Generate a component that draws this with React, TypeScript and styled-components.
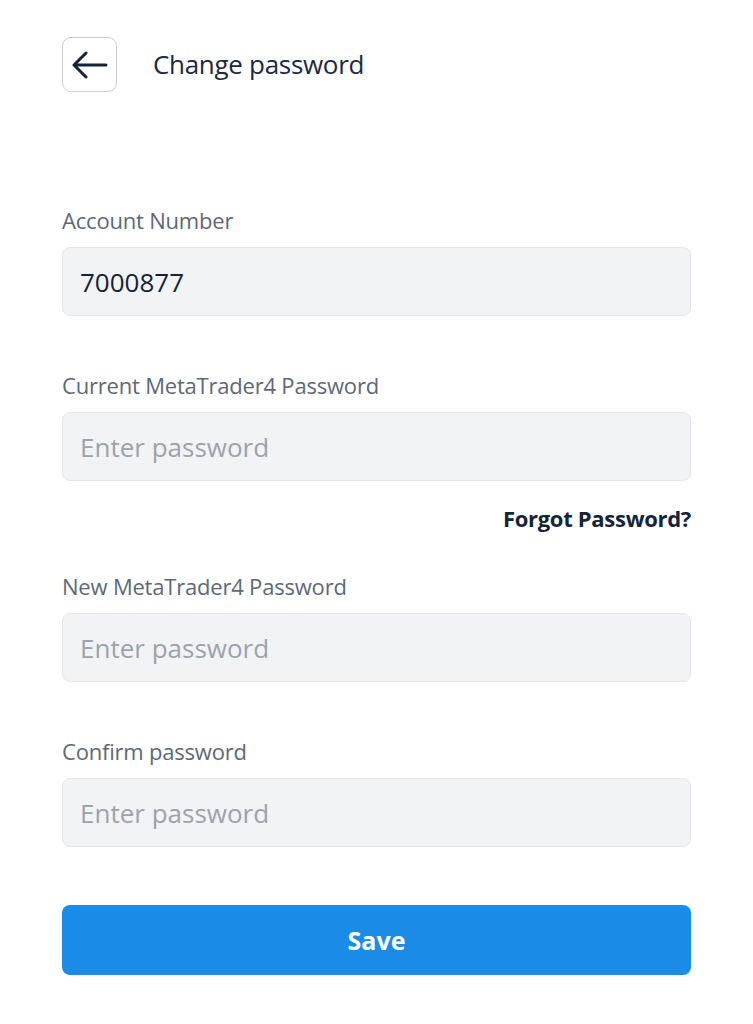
import React from "react";
import styled, { createGlobalStyle } from "styled-components";

const GlobalStyle = createGlobalStyle`
  html, body {
    margin: 0;
    padding: 0;
    background: #ffffff;
  }
  body {
    font-family: "Open Sans", "Noto Sans", "Liberation Sans", sans-serif;
  }
  * {
    box-sizing: border-box;
  }
`;

type TFieldProps = {
  label: string;
  value?: string;
  placeholder?: string;
  children?: React.ReactNode;
};

const Field = ({ label, value, placeholder, children }: TFieldProps) => {
  return (
    <FieldStyle>
      <LabelStyle>{label}</LabelStyle>
      <InputStyle
        type={value ? "text" : "password"}
        defaultValue={value}
        placeholder={placeholder}
        readOnly={!!value}
      />
      {children}
    </FieldStyle>
  );
};

const BackIcon = () => (
  <svg width="36" height="28" viewBox="0 0 36 28" fill="none">
    <path
      d="M2 14H34M14 2L2 14L14 26"
      stroke="#13233a"
      strokeWidth="3"
      strokeLinecap="round"
      strokeLinejoin="round"
    />
  </svg>
);

const App = () => {
  return (
    <>
      <GlobalStyle />
      <PageStyle>
        <HeaderStyle>
          <BackButtonStyle aria-label="Back">
            <BackIcon />
          </BackButtonStyle>
          <TitleStyle>Change password</TitleStyle>
        </HeaderStyle>

        <FormStyle>
          <Field label="Account Number" value="7000877" />
          <Field
            label="Current MetaTrader4 Password"
            placeholder="Enter password"
          >
            <ForgotStyle href="#">Forgot Password?</ForgotStyle>
          </Field>
          <Field label="New MetaTrader4 Password" placeholder="Enter password" />
          <Field label="Confirm password" placeholder="Enter password" />
        </FormStyle>

        <SaveButtonStyle>Save</SaveButtonStyle>
      </PageStyle>
    </>
  );
};

export default App;

const PageStyle = styled.div`
  display: flex;
  flex-direction: column;
  padding: 37px 62px 40px;
  min-height: 1024px;
`;

const HeaderStyle = styled.div`
  display: flex;
  align-items: center;
  gap: 36px;
  height: 55px;
`;

const BackButtonStyle = styled.button`
  width: 55px;
  height: 55px;
  display: flex;
  align-items: center;
  justify-content: center;
  background: #ffffff;
  border: 1.5px solid #c9ccd1;
  border-radius: 9px;
  padding: 0;
  cursor: pointer;
`;

const TitleStyle = styled.h1`
  margin: -2px 0 0;
  font-size: 26px;
  font-weight: 400;
  color: #1b2a3f;
  letter-spacing: -0.3px;
`;

const FormStyle = styled.div`
  display: flex;
  flex-direction: column;
  gap: 55px;
  margin-top: 114px;
`;

const FieldStyle = styled.div`
  display: flex;
  flex-direction: column;
  gap: 13px;
`;

const LabelStyle = styled.label`
  font-size: 22px;
  line-height: 28px;
  color: #5e6876;
  letter-spacing: -0.2px;
`;

const InputStyle = styled.input`
  height: 69px;
  width: 100%;
  padding: 0 17px;
  background: #f2f3f5;
  border: 1.5px solid #e4e6e9;
  border-radius: 8px;
  font-family: inherit;
  font-size: 26px;
  color: #13233a;
  outline: none;

  &::placeholder {
    color: #9ba3ad;
  }
`;

const ForgotStyle = styled.a`
  align-self: flex-end;
  margin: 10px 0 -15px;
  font-size: 22px;
  line-height: 28px;
  font-weight: 700;
  color: #13233a;
  text-decoration: none;
  letter-spacing: -0.3px;
`;

const SaveButtonStyle = styled.button`
  margin-top: 58px;
  height: 70px;
  width: 100%;
  background: #1a8ce8;
  border: none;
  border-radius: 8px;
  color: #ffffff;
  font-family: inherit;
  font-size: 25px;
  font-weight: 700;
  cursor: pointer;
`;
